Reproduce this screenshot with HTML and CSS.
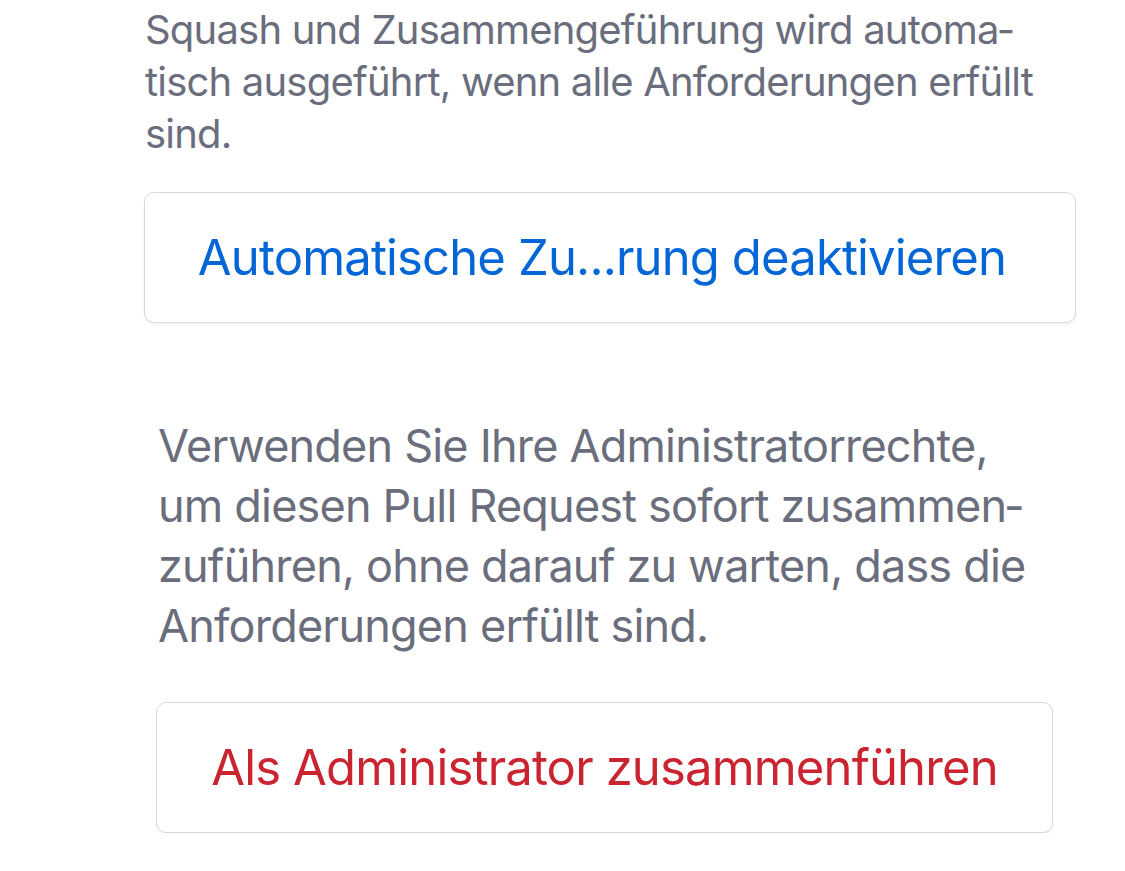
FILE: index.html
```html
<!DOCTYPE html>
<html lang="de">
<head>
  <meta charset="UTF-8">
  <title>Zusammenführen</title>
  <link rel="stylesheet" href="styles.css">
</head>
<body>
  <div class="merge-box auto-merge">
    <p class="note">Squash und Zusammengeführung wird automa&shy;tisch ausgeführt, wenn alle Anforderungen erfüllt sind.</p>
    <button class="action blue">Automatische Zu...rung deaktivieren</button>
  </div>

  <div class="merge-box admin-merge">
    <p class="note big">Verwenden Sie Ihre Administratorrechte, um diesen Pull Request sofort zusammen&shy;zuführen, ohne darauf zu warten, dass die Anforderungen erfüllt sind.</p>
    <button class="action red">Als Administrator zusammenführen</button>
  </div>
</body>
</html>
```

FILE: styles.css
```css
body {
  margin: 0;
  background: #fff;
  font-family: Inter, "Noto Sans", sans-serif;
}
.merge-box {
  display: flex;
  flex-direction: column;
}
.auto-merge {
  margin-left: 144px;
  width: 932px;
  padding-top: 4px;
}
.admin-merge {
  margin-left: 156px;
  width: 897px;
  margin-top: 93px;
}
.note {
  margin: 0 0 32px 1px;
  color: #6a6e7c;
  font-size: 40px;
  line-height: 52px;
  letter-spacing: -0.8px;
}
.note.big {
  font-size: 45px;
  line-height: 60px;
  margin: 0 0 46px 2px;
  padding-right: 15px;
}
.action {
  height: 131px;
  border: 1.5px solid #d5d8dc;
  border-radius: 10px;
  background: #fff;
  box-shadow: 0 2px 3px rgba(0,0,0,0.05);
  font-family: inherit;
  font-size: 49px;
  letter-spacing: -0.85px;
  text-align: center;
}
.blue {
  color: #0366d6;
  padding-right: 22px;
}
.red {
  color: #cb2431;
}
```
